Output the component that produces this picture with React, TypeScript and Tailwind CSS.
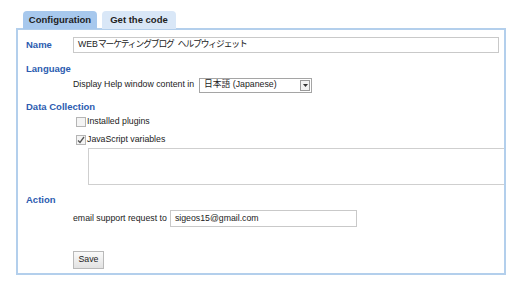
import React from "react";

export default function App() {
  return (
    <div className="w-[522px] h-[291px] bg-white font-['Liberation_Sans',Arial,sans-serif] text-[8.75px] text-[#333] pt-[11px] pl-[16px]">
      <div className="flex gap-[5px] pl-[7px]">
        <div className="h-[18px] w-[74px] bg-[#a7c8ed] rounded-t-[4px] font-bold text-[9.5px] text-[#1e1e1e] flex items-center justify-center">
          Configuration
        </div>
        <div className="h-[18px] w-[74px] bg-[#d9e7f7] rounded-t-[4px] font-bold text-[9.5px] text-[#1e1e1e] flex items-center justify-center">
          Get the code
        </div>
      </div>
      <div className="w-[490px] h-[247px] -mt-[1px] border-2 border-[#b3cfec] overflow-hidden">
        <div className="flex items-center mt-[7px] pl-[8px]">
          <div className="w-[47px] font-bold text-[9.5px] text-[#2c5cb0]">Name</div>
          <div className="w-[426px] h-[16px] border border-[#c9c9c9] pl-[4px] flex items-center text-[#222] font-['Liberation_Sans','Noto_Sans_CJK_JP',sans-serif]">
            <span>WEB</span>
            <span className="tracking-[-1.1px]">マーケティングブログ</span>
            <span className="ml-[4px] tracking-[-1.1px]">ヘルプウィジェット</span>
          </div>
        </div>
        <div className="mt-[8px] pl-[8px] h-[16px] leading-[16px] font-bold text-[9.5px] text-[#2c5cb0]">Language</div>
        <div className="flex items-center h-[16px] pl-[55px]">
          <span className="text-[#222]">Display Help window content in</span>
          <div className="ml-[5px] w-[113px] h-[15px] border border-[#a5a5a5] flex items-center justify-between pl-[4px] pr-[1px] text-[#222] font-['Liberation_Sans','Noto_Sans_CJK_JP',sans-serif]">
            <span>日本語 (Japanese)</span>
            <span className="w-[10px] h-[11px] border border-[#9a9a9a] bg-[#f2f2f2] flex items-center justify-center">
              <svg width="5" height="3" viewBox="0 0 5 3"><path d="M0 0h5L2.5 3z" fill="#333" /></svg>
            </span>
          </div>
        </div>
        <div className="mt-[7px] pl-[8px] h-[14px] leading-[14px] font-bold text-[9.5px] text-[#2c5cb0]">Data Collection</div>
        <div className="flex items-center h-[14px] mt-[1px] pl-[58px]">
          <span className="w-[10px] h-[10px] border border-[#b5b5b5] bg-[#f4f4f4] mr-[1px]" />
          <span className="text-[#222]">Installed plugins</span>
        </div>
        <div className="flex items-center h-[14px] mt-[4px] pl-[58px]">
          <span className="w-[10px] h-[10px] border border-[#b5b5b5] bg-[#f4f4f4] mr-[1px] flex items-center justify-center">
            <svg width="8" height="8" viewBox="0 0 8 8"><path d="M1 4.5l2 2L7 1" stroke="#555" strokeWidth="1.3" fill="none" /></svg>
          </span>
          <span className="text-[#222]">JavaScript variables</span>
        </div>
        <div className="mt-[1px] ml-[70px] w-[430px] h-[37px] border border-[#cfcfcf]" />
        <div className="mt-[8px] pl-[8px] h-[14px] leading-[14px] font-bold text-[9.5px] text-[#2c5cb0]">Action</div>
        <div className="flex items-center mt-[3px] pl-[55px]">
          <span className="text-[#222]">email support request to</span>
          <div className="ml-[3px] w-[187px] h-[17px] border border-[#c9c9c9] pl-[4px] flex items-center text-[#222]">
            sigeos15@gmail.com
          </div>
        </div>
        <div className="mt-[24px] ml-[55px] w-[31px] h-[18px] border border-[#b9b9b9] bg-gradient-to-b from-[#fafafa] to-[#e2e2e2] flex items-center justify-center text-[#222]">
          Save
        </div>
      </div>
    </div>
  );
}
